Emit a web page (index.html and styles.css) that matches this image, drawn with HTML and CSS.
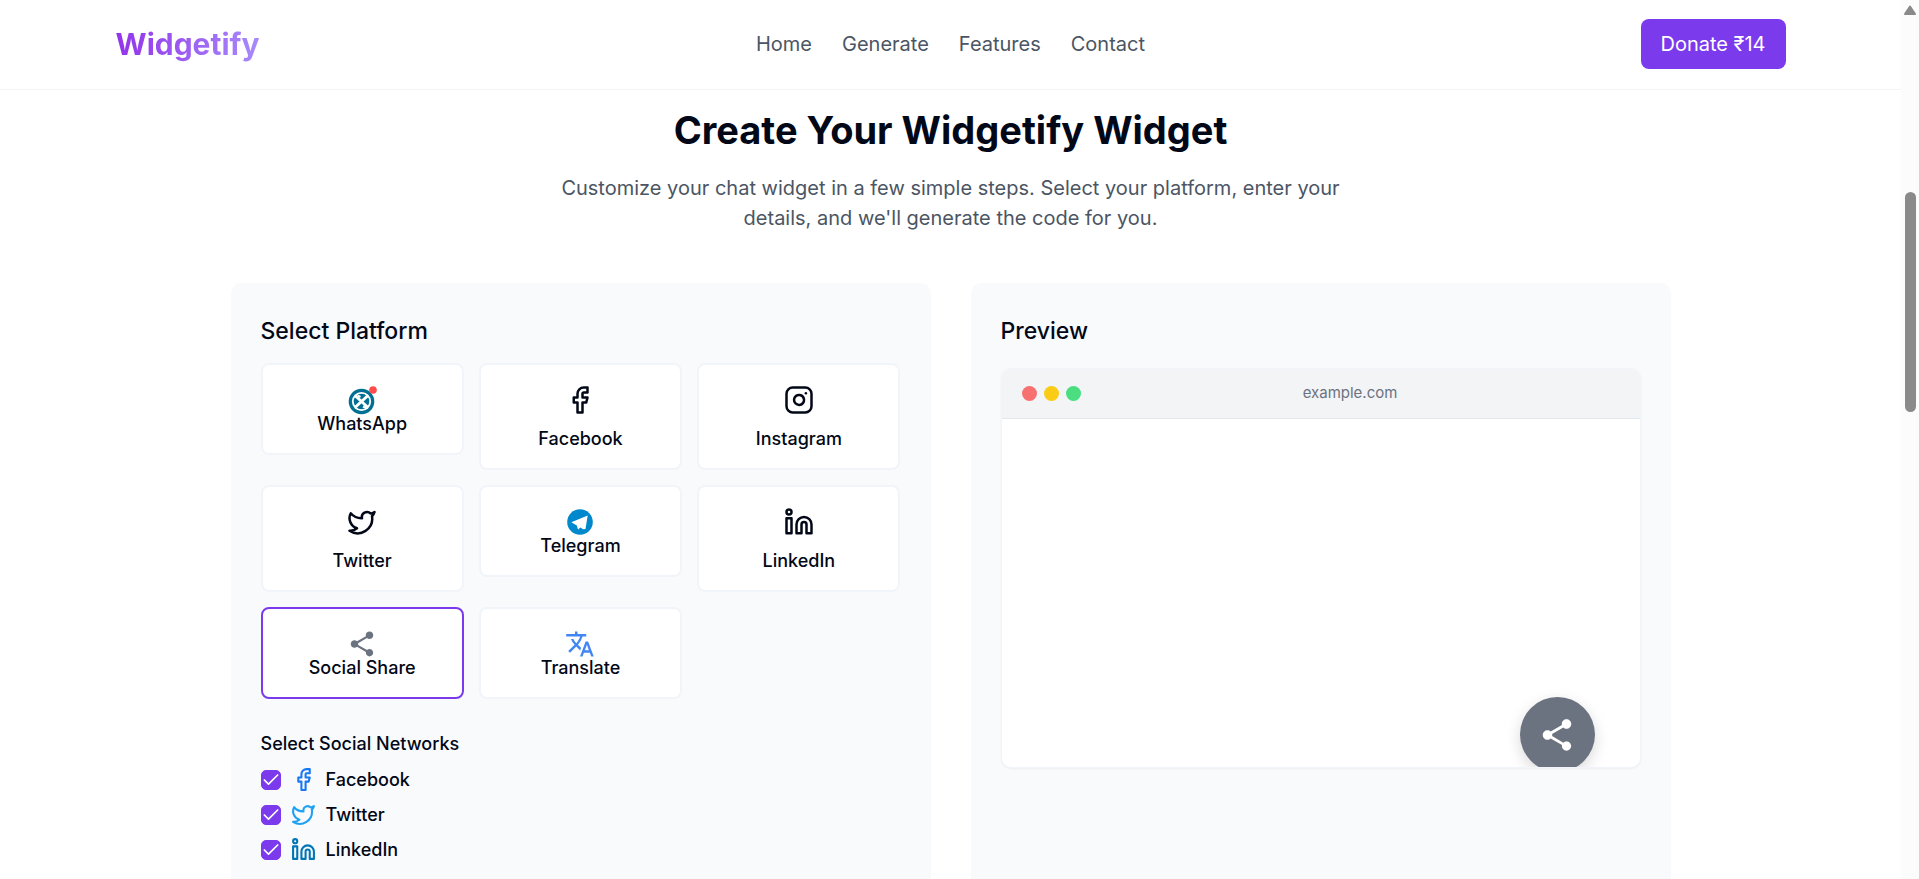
FILE: index.html
```html
<!DOCTYPE html>
<html lang="en">
<head>
<meta charset="utf-8">
<meta name="viewport" content="width=device-width, initial-scale=1">
<title>Widgetify</title>
<link rel="stylesheet" href="styles.css">
</head>
<body>
<svg class="sprite" aria-hidden="true">
  <symbol id="facebook" viewBox="0 0 24 24"><path class="line" d="M18 2h-3a5 5 0 0 0-5 5v3H7v4h3v8h4v-8h3l1-4h-4V7a1 1 0 0 1 1-1h3z"/></symbol>
  <symbol id="twitter" viewBox="0 0 24 24"><path class="line" d="M22 4s-.7 2.1-2 3.4c1.6 10-9.4 17.3-18 11.6 2.2.1 4.4-.6 6-2C3 15.500.5 9.600 3 5c2.200 2.600 5.600 4.100 9 4-.9-4.200 4-6.600 7-3.800 1.100 0 3-1.200 3-1.200z"/></symbol>
  <symbol id="linkedin" viewBox="0 0 24 24"><g class="line"><path d="M16 8a6 6 0 0 1 6 6v7h-4v-7a2 2 0 0 0-4 0v7h-4v-7a6 6 0 0 1 6-6z"/><rect x="2" y="9" width="4" height="12"/><circle cx="4" cy="4" r="2"/></g></symbol>
  <symbol id="share" viewBox="0 0 24 24"><path fill="currentColor" d="M18 16.080c-.76 0-1.440.3-1.960.770L8.910 12.700c.05-.23.09-.46.09-.7s-.04-.47-.09-.7l7.050-4.110c.54.5 1.250.81 2.040.81 1.660 0 3-1.340 3-3s-1.340-3-3-3-3 1.340-3 3c0 .24.04.47.09.7L8.040 9.810C7.500 9.310 6.790 9 6 9c-1.660 0-3 1.340-3 3s1.340 3 3 3c.79 0 1.500-.31 2.040-.81l7.120 4.160c-.05.21-.08.43-.08.65 0 1.610 1.310 2.920 2.920 2.920s2.920-1.310 2.920-2.920-1.310-2.920-2.920-2.920z"/></symbol>
</svg>

<div class="page">
  <header class="site-header">
    <div class="header-inner">
      <a class="brand" href="#">Widgetify</a>
      <nav class="nav" aria-label="Main">
        <a href="#">Home</a>
        <a href="#">Generate</a>
        <a href="#">Features</a>
        <a href="#">Contact</a>
      </nav>
      <div class="header-action"><button class="donate" type="button">Donate ₹14</button></div>
    </div>
  </header>

  <main class="content">
    <div class="intro">
      <h1>Create Your Widgetify Widget</h1>
      <p>Customize your chat widget in a few simple steps. Select your platform, enter your details, and we'll generate the code for you.</p>
    </div>

    <div class="columns">
      <section class="panel">
        <h2>Select Platform</h2>
        <div class="platforms">
          <button class="platform" type="button">
            <svg class="icon" viewBox="0 0 30 30" aria-hidden="true">
              <circle cx="14.500" cy="16.500" r="12.800" fill="#006f94"/>
              <circle cx="14.500" cy="16.500" r="9.600" fill="#fff"/>
              <circle cx="14.500" cy="16.500" r="7.800" fill="#006f94"/>
              <path d="M8 10.500l13 12M21 10.500l-13 12" stroke="#fff" stroke-width="3"/>
              <path d="M10.500 10.500l3 1.500M16 21.500l3 1.500" stroke="#fff" stroke-width="2"/>
              <circle cx="26" cy="5" r="3.800" fill="#ff4b4b"/>
            </svg>
            <span>WhatsApp</span>
          </button>
          <button class="platform spaced" type="button"><svg class="icon" aria-hidden="true"><use href="#facebook"/></svg><span>Facebook</span></button>
          <button class="platform spaced" type="button">
            <svg class="icon" viewBox="0 0 24 24" aria-hidden="true"><g class="line"><rect x="2" y="2" width="20" height="20" rx="5"/><path d="M16 11.370A4 4 0 1 1 12.630 8 4 4 0 0 1 16 11.370z"/><path d="M17.500 6.500h.01"/></g></svg>
            <span>Instagram</span>
          </button>
          <button class="platform spaced" type="button"><svg class="icon" aria-hidden="true"><use href="#twitter"/></svg><span>Twitter</span></button>
          <button class="platform" type="button">
            <svg class="icon" viewBox="0 0 30 30" aria-hidden="true">
              <circle cx="15" cy="15" r="12.800" fill="#08c"/>
              <path fill="#fff" d="M6.300 15.200L22.700 8.600 20.500 22 18 22.200 15.500 20.500 13 22.600 11.800 18.400z"/>
            </svg>
            <span>Telegram</span>
          </button>
          <button class="platform spaced" type="button"><svg class="icon" aria-hidden="true"><use href="#linkedin"/></svg><span>LinkedIn</span></button>
          <button class="platform selected" type="button" aria-pressed="true"><svg class="icon slate" aria-hidden="true"><use href="#share"/></svg><span>Social Share</span></button>
          <button class="platform" type="button">
            <svg class="icon" viewBox="0 0 24 24" aria-hidden="true"><path fill="#4285f4" d="M12.870 15.070l-2.540-2.510.03-.03A17.520 17.520 0 0 0 14.070 6H17V4h-7V2H8v2H1v1.990h11.170C11.500 7.920 10.440 9.750 9 11.350 8.070 10.320 7.300 9.190 6.690 8h-2c.73 1.630 1.730 3.170 2.980 4.560l-5.090 5.020L4 19l5-5 3.110 3.110.76-2.040zM18.500 10h-2L12 22h2l1.120-3h4.750L21 22h2l-4.500-12zm-2.620 7l1.620-4.330L19.120 17h-3.240z"/></svg>
            <span>Translate</span>
          </button>
        </div>

        <fieldset class="networks">
          <legend>Select Social Networks</legend>
          <label class="network"><input type="checkbox" checked><svg class="brand-facebook" aria-hidden="true"><use href="#facebook"/></svg><span>Facebook</span></label>
          <label class="network"><input type="checkbox" checked><svg class="brand-twitter" aria-hidden="true"><use href="#twitter"/></svg><span>Twitter</span></label>
          <label class="network"><input type="checkbox" checked><svg class="brand-linkedin" aria-hidden="true"><use href="#linkedin"/></svg><span>LinkedIn</span></label>
        </fieldset>
      </section>

      <section class="panel">
        <h2>Preview</h2>
        <div class="browser">
          <div class="browser-bar">
            <div class="dots"><i class="red"></i><i class="yellow"></i><i class="green"></i></div>
            <div class="address">example.com</div>
          </div>
          <div class="browser-body">
            <button class="bubble" type="button" aria-label="Share"><svg aria-hidden="true"><use href="#share"/></svg></button>
          </div>
        </div>
      </section>
    </div>
  </main>
</div>

<div class="scrollbar" aria-hidden="true">
  <svg class="scroll-arrow" viewBox="0 0 12 10"><path d="M6 1.500L11 9H1z" fill="#8a8a8a" stroke="#8a8a8a" stroke-width="2" stroke-linejoin="round"/></svg>
  <div class="scroll-thumb"></div>
</div>
</body>
</html>
```

FILE: styles.css
```css
* { box-sizing: border-box; }

body {
  margin: 0;
  height: 100vh;
  display: flex;
  overflow: hidden;
  background: #fff;
  color: #020817;
  font-family: Inter, "Liberation Sans", sans-serif;
  font-size: 20px;
  line-height: 30px;
}

button { font: inherit; color: inherit; cursor: pointer; }
a { text-decoration: none; }

.sprite { position: absolute; width: 0; height: 0; }
.line {
  fill: none;
  stroke: currentColor;
  stroke-width: 2;
  stroke-linecap: round;
  stroke-linejoin: round;
}

.page { flex: 1; min-width: 0; height: 100vh; overflow: hidden; }

.site-header { border-bottom: 1px solid #f3f4f6; }
.header-inner {
  display: grid;
  grid-template-columns: 1fr auto 1fr;
  align-items: center;
  max-width: 1750px;
  margin: 0 auto;
  padding: 19px 40px 20px;
}
.brand {
  justify-self: start;
  font-size: 30px;
  font-weight: 700;
  line-height: 40px;
  color: transparent;
  background: linear-gradient(90deg, #9333ea, #a78bfa);
  background-clip: text;
  -webkit-background-clip: text;
}
.nav { display: flex; gap: 30px; }
.nav a { color: #4b5563; }
.header-action { justify-self: end; }
.donate {
  display: block;
  padding: 10px 20px;
  border: 0;
  border-radius: 8px;
  background: #7c3aed;
  color: #fff;
  font-weight: 400;
}

.content { max-width: 1440px; margin: 0 auto; }
.intro { max-width: 840px; margin: 0 auto; padding: 18px 0 50px; text-align: center; }
h1 { margin: 0 0 20px; font-size: 38px; line-height: 45px; font-weight: 650; }
.intro p { margin: 0; color: #4b5563; }

.columns { display: grid; grid-template-columns: 1fr 1fr; gap: 40px; }
.panel { padding: 30px; min-height: 700px; border-radius: 10px; background: #f9fafc; }
h2 { margin: 0; font-size: 23px; line-height: 37px; font-weight: 450; }

.platforms {
  display: grid;
  grid-template-columns: repeat(3, 1fr);
  gap: 15px;
  align-items: start;
  margin-top: 13px;
}
.platform {
  display: flex;
  flex-direction: column;
  align-items: center;
  padding: 20px;
  border: 2px solid #f1f5f9;
  border-radius: 8px;
  background: #fff;
  font-size: 18px;
  line-height: 18px;
  font-weight: 450;
}
.platform.spaced { gap: 15px; }
.platform.selected { border-color: #7c3aed; }
.icon { width: 30px; height: 30px; }
.slate { color: #6b7280; }

.networks {
  display: flex;
  flex-direction: column;
  gap: 10px;
  margin: 36px 0 0;
  padding: 0;
  border: 0;
  font-size: 18px;
  line-height: 18px;
  font-weight: 450;
}
.networks legend { padding: 0; margin-bottom: 14px; }
.network { display: flex; align-items: center; gap: 10px; }
.network svg { width: 25px; height: 25px; }
.network input {
  appearance: none;
  width: 20px;
  height: 20px;
  margin: 0;
  border-radius: 5px;
  border: 1px solid #7c3aed;
}
.network input:checked {
  background: #7c3aed url("data:image/svg+xml,%3Csvg xmlns='http://www.w3.org/2000/svg' viewBox='0 0 24 24' fill='none' stroke='white' stroke-width='2' stroke-linecap='round' stroke-linejoin='round'%3E%3Cpath d='M20 6 9 17l-5-5'/%3E%3C/svg%3E") center / 20px no-repeat;
}
.brand-facebook { color: #1877f2; }
.brand-twitter { color: #1da1f2; }
.brand-linkedin { color: #0077b5; }

.browser {
  display: flex;
  flex-direction: column;
  height: 400px;
  margin-top: 18px;
  overflow: hidden;
  border: 1px solid #f1f5f9;
  border-radius: 10px;
  background: #fff;
  box-shadow: 0 1px 2px rgba(0, 0, 0, .05);
}
.browser-bar {
  display: flex;
  align-items: center;
  padding: 14px 20px 15px;
  border-bottom: 1px solid #e2e8f0;
  background: #f3f4f6;
}
.dots { display: flex; gap: 7px; }
.dots i { width: 15px; height: 15px; border-radius: 50%; }
.red { background: #f87171; }
.yellow { background: #facc15; }
.green { background: #4ade80; }
.address { flex: 1; text-align: center; font-size: 15px; line-height: 20px; color: #6b7280; }
.browser-body { position: relative; flex: 1; }
.bubble {
  position: absolute;
  right: 45px;
  bottom: -5px;
  display: grid;
  place-items: center;
  width: 75px;
  height: 75px;
  padding: 0;
  border: 0;
  border-radius: 50%;
  background: #6b7280;
  color: #fff;
  box-shadow: 0 5px 15px rgba(0, 0, 0, .15);
}
.bubble svg { width: 38px; height: 38px; }

.scrollbar { width: 18px; padding: 5px 3px; background: #fcfcfc; }
.scroll-arrow { display: block; width: 12px; height: 10px; }
.scroll-thumb { width: 11px; height: 220px; margin: 177px auto 0; border-radius: 6px; background: #8a8a8a; }
```
